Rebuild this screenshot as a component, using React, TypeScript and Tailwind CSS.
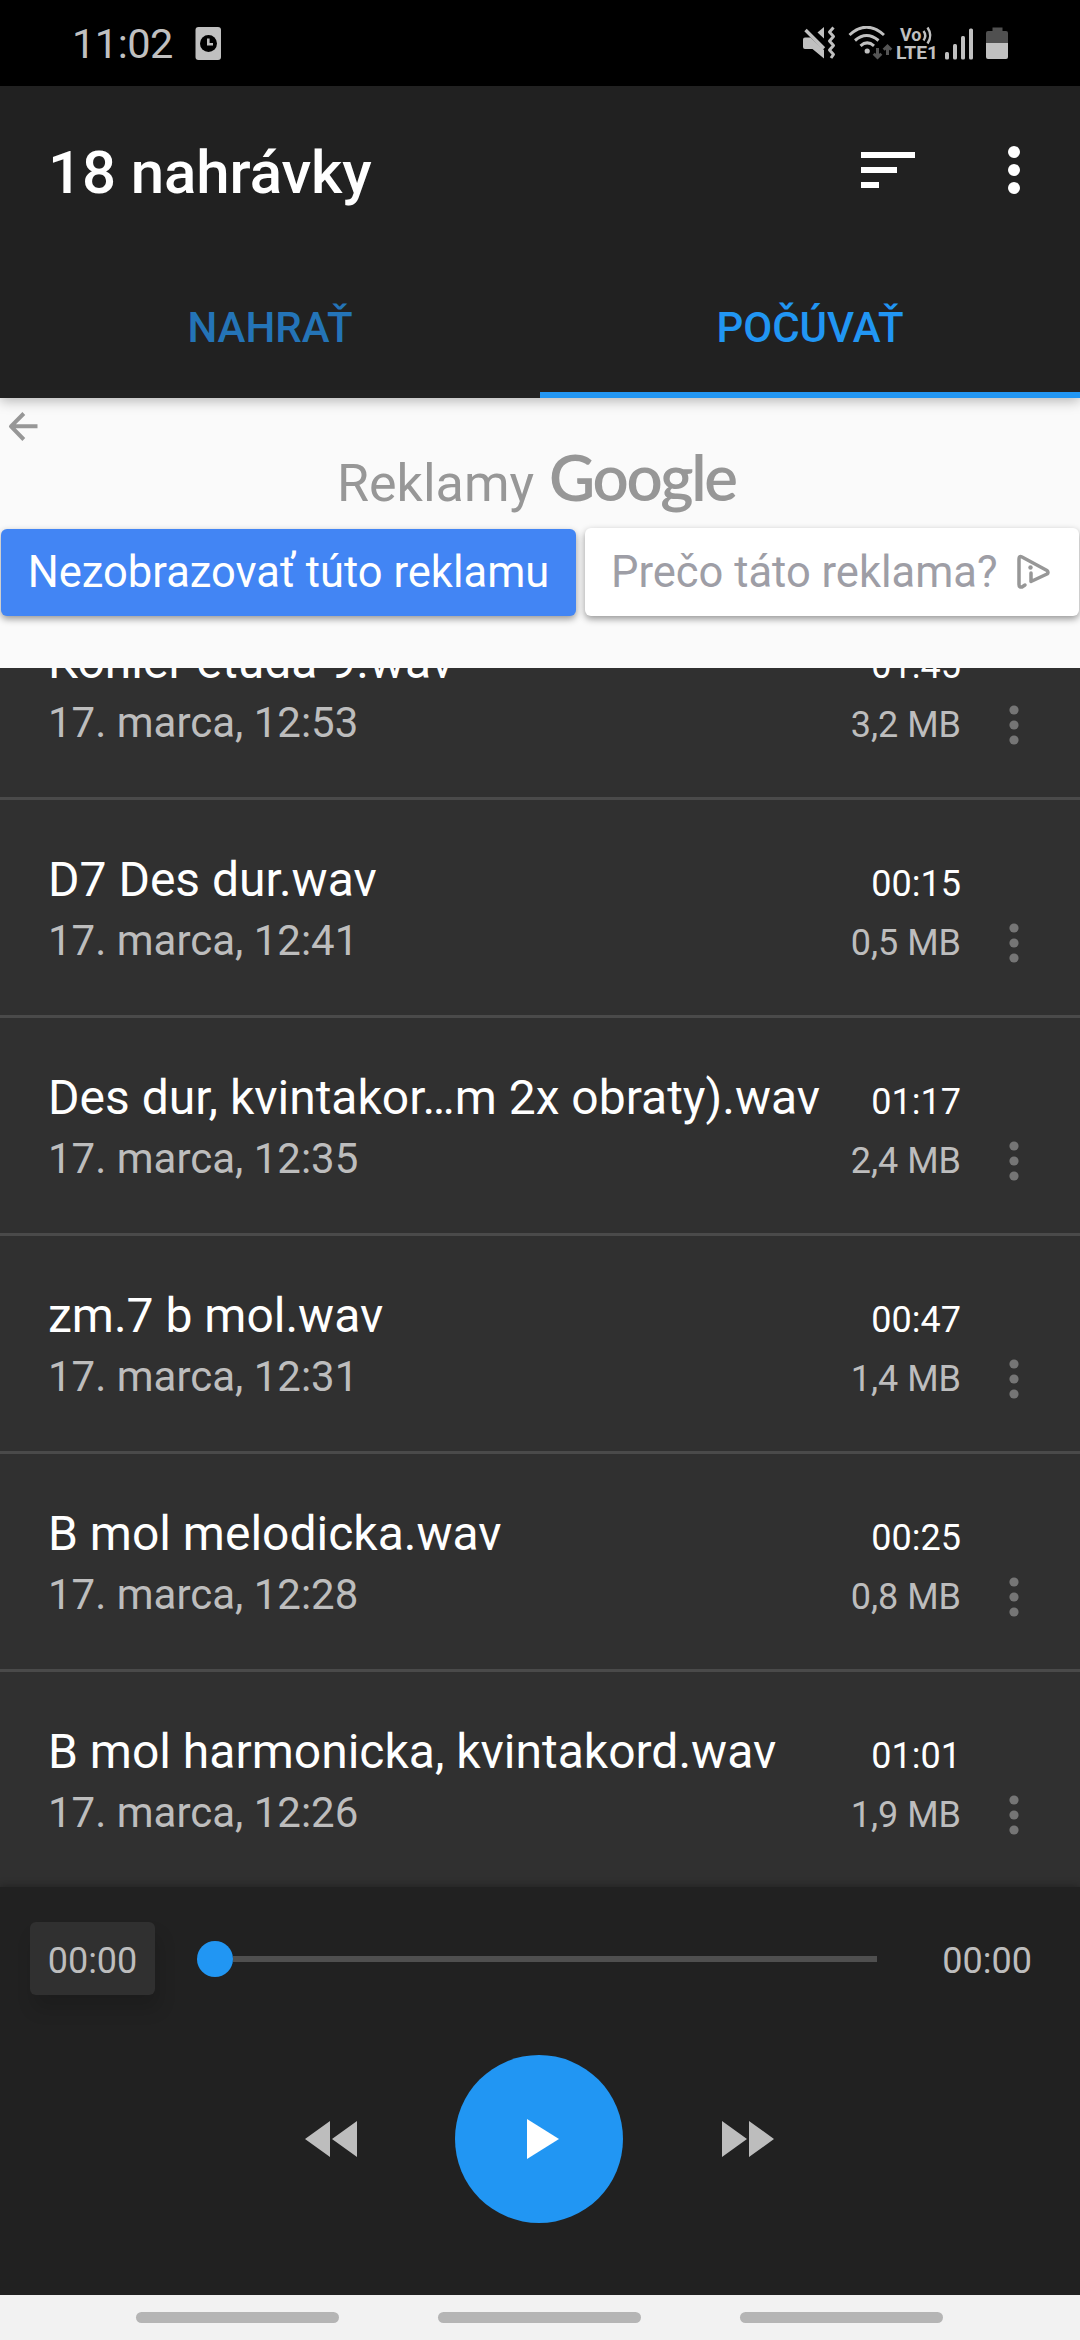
import React from "react";

type Recording = { name: string; date: string; length: string; size: string };

const recordings: Recording[] = [
  { name: "Kohler etuda 9.wav", date: "17. marca, 12:53", length: "01:45", size: "3,2 MB" },
  { name: "D7 Des dur.wav", date: "17. marca, 12:41", length: "00:15", size: "0,5 MB" },
  { name: "Des dur, kvintakor…m 2x obraty).wav", date: "17. marca, 12:35", length: "01:17", size: "2,4 MB" },
  { name: "zm.7 b mol.wav", date: "17. marca, 12:31", length: "00:47", size: "1,4 MB" },
  { name: "B mol melodicka.wav", date: "17. marca, 12:28", length: "00:25", size: "0,8 MB" },
  { name: "B mol harmonicka, kvintakord.wav", date: "17. marca, 12:26", length: "01:01", size: "1,9 MB" },
];

function StatusBar() {
  return (
    <div className="flex h-[86px] shrink-0 items-start bg-black pl-[72px] text-[#c0c0c0]">
      <span className="mt-[19px] w-[123px] text-[41.5px] leading-[49px] tracking-[-0.5px]">11:02</span>
      <svg className="mt-[27px]" width="26" height="33" viewBox="0 0 26 33">
        <rect x="0.5" y="0" width="25.5" height="33" rx="3" fill="#c0c0c0" />
        <circle cx="13.5" cy="16.5" r="8.5" fill="#000" />
        <path d="M13.3 11.5v5.7h4.7" fill="none" stroke="#c0c0c0" strokeWidth="2.6" />
      </svg>
      <div className="flex-1" />
      {/* muted speaker with vibration */}
      <svg className="mt-[26px]" width="34" height="34" viewBox="0 0 34 34" fill="#c0c0c0">
        <path d="M1 13.500Q1 11.500 3 11.500H8.500L22 24V32.500L10.500 23H3Q1 23 1 21Z" />
        <path d="M3.500 4L22 22.500" stroke="#c0c0c0" strokeWidth="3.300" />
        <path d="M22 1V12.500L15.500 6.500Z" />
        <path d="M32 2L28 6.500L32 11L28 15.500L32 20L28 24.500L32 29L29.500 32.500" fill="none" stroke="#c0c0c0" strokeWidth="3" strokeLinejoin="round" transform="translate(-0.500 -0.500)" />
      </svg>
      <svg className="ml-[12px] mt-[26px]" width="45" height="34" viewBox="0 0 45 34" fill="none" stroke="#c0c0c0" strokeWidth="3">
        <path d="M1.500 9Q18.500 -6.500 36 9" />
        <path d="M7 14.500Q18.500 4.500 30.500 14.500" />
        <path d="M12.500 19.800Q19.200 14 26 19.800" />
        <circle cx="19.200" cy="25" r="2.600" fill="#c0c0c0" stroke="none" />
        <path d="M29.500 22V31M25.700 27.700L29.500 31.500L33.300 27.700M39.500 29V20M35.700 23.800L39.500 20L43.300 23.800" stroke="#555" />
      </svg>
      <svg className="ml-[3px] mt-[26px] overflow-visible" width="42" height="36" viewBox="0 0 42 36" fill="#c0c0c0">
        <text x="4" y="14.700" fontFamily="Roboto" fontSize="18.700" fontWeight="700" textLength="21.500" lengthAdjust="spacingAndGlyphs">Vo</text>
        <path d="M27.500 5Q31 9.500 27.500 14.500M31.500 1.500Q37 9.500 31.500 17.500" fill="none" stroke="#c0c0c0" strokeWidth="2.400" />
        <text x="0" y="33" fontFamily="Roboto" fontSize="19" fontWeight="700" textLength="42" lengthAdjust="spacingAndGlyphs">LTE1</text>
      </svg>
      <svg className="ml-[6px] mt-[27px]" width="30" height="33" viewBox="0 0 30 33" fill="#c0c0c0">
        <rect x="1" y="25" width="4" height="7.500" rx="1.500" />
        <rect x="9" y="17" width="4" height="15.500" rx="1.500" />
        <rect x="17" y="9" width="4" height="23.500" rx="1.500" />
        <rect x="25" y="1.500" width="4" height="31" rx="1.500" />
      </svg>
      <svg className="ml-[12px] mr-[72px] mt-[27px]" width="22" height="32" viewBox="0 0 22 32">
        <path d="M6.500 0.500H16.500V4H20Q22 4 22 6V16H0V6Q0 4 2 4H6.500Z" fill="#505050" />
        <path d="M0 16H22V30Q22 32 20 32H2Q0 32 0 30Z" fill="#c0c0c0" />
      </svg>
    </div>
  );
}

function Header() {
  return (
    <header className="relative z-10 h-[312px] shrink-0 bg-[#212121] shadow-[0_3px_12px_rgba(0,0,0,0.28)]">
      <div className="flex h-[168px] items-center pl-[48px] pr-[60px]">
        <h1 className="mt-[6px] flex-1 text-[60px] font-medium leading-[70px] tracking-[-0.1px] text-white">18 nahrávky</h1>
        <svg width="54" height="36" viewBox="0 0 54 36" fill="#fff">
          <rect width="54" height="6" />
          <rect y="15" width="36" height="6" />
          <rect y="30" width="18" height="6" />
        </svg>
        <svg className="ml-[93px]" width="12" height="48" viewBox="0 0 12 48" fill="#fff">
          <circle cx="6" cy="6" r="6" />
          <circle cx="6" cy="24" r="6" />
          <circle cx="6" cy="42" r="6" />
        </svg>
      </div>
      <nav className="grid h-[144px] grid-cols-2 text-center text-[42px] font-medium leading-[49px]">
        <div className="pt-[49px] text-[#2474b7]">NAHRAŤ</div>
        <div className="border-b-[6px] border-[#2196f3] pt-[49px] text-[#2196f3]">POČÚVAŤ</div>
      </nav>
    </header>
  );
}

function AdPanel() {
  return (
    <section className="relative z-[5] h-[270px] shrink-0 bg-[#fafafa]">
      <svg className="absolute left-[7px] top-[13px]" width="32" height="31" viewBox="0 0 32 31" fill="none" stroke="#979797" strokeWidth="4">
        <path d="M30.500 15.300H4M16.800 2.500L4 15.300L16.800 28.500" strokeLinejoin="round" />
      </svg>
      <div className="flex items-baseline pl-[337px] pt-[46px] leading-[66px] text-[#979797]">
        <span className="w-[212px] text-[52px]">Reklamy</span>
        <span className="font-['Lato'] text-[63.5px] font-semibold tracking-[-2.3px]">Google</span>
      </div>
      <div className="absolute left-[1px] right-[1px] top-[130px] flex gap-[9px] text-[43.5px] leading-[52px]">
        <div className="mt-[1px] flex h-[87px] w-[575px] items-center justify-center rounded-[6px] bg-[#4285f4] text-white shadow-[0_3px_7px_rgba(0,0,0,0.4)]">
          Nezobrazovať túto reklamu
        </div>
        <div className="flex h-[88px] flex-1 items-center rounded-[6px] bg-white pl-[26px] text-[#9e9ea6] shadow-[0_3px_7px_rgba(0,0,0,0.4)]">
          <span className="w-[405px] whitespace-nowrap pt-[1px]">Prečo táto reklama?</span>
          <svg width="34" height="36" viewBox="0 0 34 36" fill="none" stroke="#979797" strokeWidth="3.500" strokeLinejoin="round" strokeLinecap="round">
            <path d="M9 31L6 33Q3 33.500 3 30.500V5Q3 1.500 6 3L31 16.500Q33 18.500 31 20L15 27.500V19" />
            <circle cx="14.500" cy="13.500" r="2.200" fill="#979797" stroke="none" />
          </svg>
        </div>
      </div>
    </section>
  );
}

function Row({ item }: { item: Recording }) {
  return (
    <li className="flex h-[218px] shrink-0 border-b-[3px] border-[#4a4a4a] pl-[48px]">
      <div className="flex-1 whitespace-nowrap pt-[52px]">
        <div className="text-[48px] leading-[56px] text-white">{item.name}</div>
        <div className="mt-[8px] text-[42px] leading-[49px] text-[#bdbdbd]">{item.date}</div>
      </div>
      <div className="whitespace-nowrap pt-[63px] text-right text-[36px] leading-[42px]">
        <div className="text-white">{item.length}</div>
        <div className="mt-[17px] text-[#bdbdbd]">{item.size}</div>
      </div>
      <svg className="ml-[48px] mr-[61px] mt-[123px]" width="10" height="40" viewBox="0 0 10 40" fill="#757575">
        <circle cx="5" cy="5" r="4.600" />
        <circle cx="5" cy="20" r="4.600" />
        <circle cx="5" cy="35" r="4.600" />
      </svg>
    </li>
  );
}

function Player() {
  return (
    <footer className="relative z-10 h-[408px] shrink-0 bg-[#212121] text-[36px] leading-[42px] text-[#bdbdbd] shadow-[0_-1px_8px_rgba(0,0,0,0.3)]">
      <div className="flex items-center pl-[30px] pr-[48px] pt-[35px]">
        <div className="flex h-[73px] w-[125px] items-center justify-center rounded-[6px] bg-[#303030] pt-[4px] shadow-[4px_14px_18px_rgba(0,0,0,0.14)]">00:00</div>
        <div className="ml-[42px] flex flex-1 items-center">
          <div className="size-[36px] rounded-full bg-[#2196f3]" />
          <div className="h-[6px] flex-1 bg-[#4f4f4f]" />
        </div>
        <div className="ml-[65px] pt-[4px]">00:00</div>
      </div>
      <div className="mt-[60px] flex items-center pl-[305px]">
        <svg width="52" height="36" viewBox="0 0 52 36" fill="#bdbdbd">
          <path d="M25 0V36L0 18ZM52 0V36L27 18Z" />
        </svg>
        <div className="ml-[98px] flex size-[168px] items-center rounded-full bg-[#2196f3] pl-[72px]">
          <svg width="32" height="40" viewBox="0 0 32 40" fill="#fff">
            <path d="M0 0L32 20L0 40Z" />
          </svg>
        </div>
        <svg className="ml-[99px]" width="52" height="36" viewBox="0 0 52 36" fill="#bdbdbd">
          <path d="M0 0V36L25 18ZM27 0V36L52 18Z" />
        </svg>
      </div>
    </footer>
  );
}

export default function App() {
  return (
    <div className="flex h-[2340px] w-[1080px] flex-col overflow-hidden bg-[#303030] font-['Roboto',sans-serif]">
      <StatusBar />
      <Header />
      <AdPanel />
      <main className="h-[1219px] shrink-0 overflow-hidden">
        <ul className="-mt-[86px] flex flex-col">
          {recordings.map((r) => (
            <Row key={r.date} item={r} />
          ))}
        </ul>
      </main>
      <Player />
      <div className="relative z-20 flex h-[45px] shrink-0 gap-[99px] bg-[#f2f2f2] pl-[136px] pt-[17px]">
        <div className="h-[11px] w-[203px] rounded-full bg-[#b5b5b5]" />
        <div className="h-[11px] w-[203px] rounded-full bg-[#b5b5b5]" />
        <div className="h-[11px] w-[203px] rounded-full bg-[#b5b5b5]" />
      </div>
    </div>
  );
}
